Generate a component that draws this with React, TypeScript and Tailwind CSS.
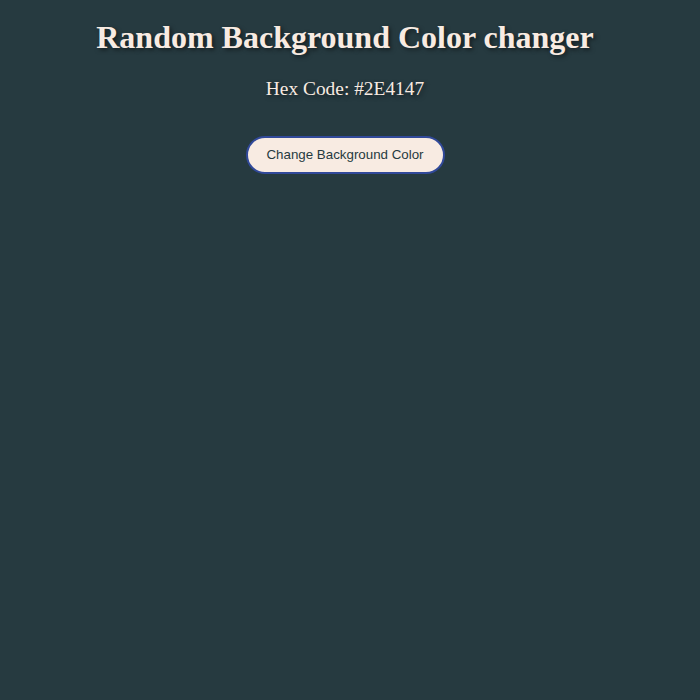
import React from 'react';

const App = () => {
  return (
    <div className="min-h-[700px] bg-[#263a40] text-center font-['Liberation_Serif',serif] text-[#f8ebe2]">
      <div className="flex flex-col items-center pr-[10px] pt-[19px]">
        <h1 className="text-[32px] font-bold leading-[37px] [text-shadow:2px_2px_4px_rgba(0,0,0,0.5)]">
          Random Background Color changer
        </h1>
        <p className="mt-[22px] text-[19.4px] leading-[22px] [text-shadow:2px_2px_4px_rgba(0,0,0,0.5)]">
          Hex Code: #2E4147
        </p>
        <button className="mt-[36px] h-[38px] w-[199px] rounded-full border-2 border-[#31499a] bg-[#f8ebe2] font-['Liberation_Sans',sans-serif] text-[13.33px] text-[#263a40]">
          Change Background Color
        </button>
      </div>
    </div>
  );
};

export default App;
